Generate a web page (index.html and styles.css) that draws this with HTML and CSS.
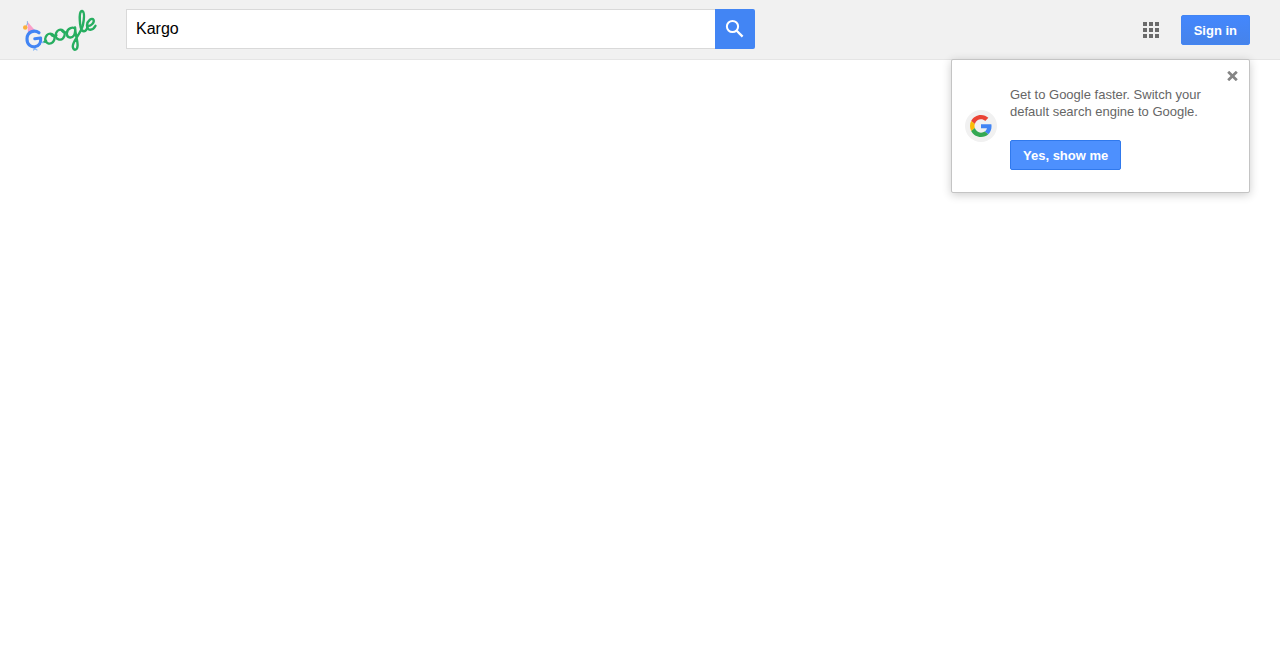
FILE: index.html
```html
<!DOCTYPE html>
<html lang="en">
<head>
<meta charset="utf-8">
<title>Kargo - Google Search</title>
<link rel="stylesheet" href="styles.css">
</head>
<body>
<header class="topbar">
  <a class="logo" href="#" aria-label="Google">
    <svg width="80" height="46" viewBox="20 7 80 46" fill="none" stroke-linecap="round" stroke-linejoin="round">
      <path d="M28 33 L27.3 21.5 L35.2 30.5 Z" fill="#f99fc9"/>
      <path d="M27.4 24 V21.5 M26.5 25.5 L27.5 23.5" stroke="#8fb4e8" stroke-width="1"/>
      <circle cx="25.2" cy="27.5" r="2.2" fill="#fbb03b"/>
      <path d="M34.5 47 L35 49.5 M33.5 50 L35 48.5 L37 50" stroke="#8ebcf7" stroke-width="1.2"/>
      <path d="M40.5 42 Q43.5 43 46.5 41.5" stroke="#8ebcf7" stroke-width="1.8"/>
      <path d="M39 32.8 C34.5 29.2 27.2 31.6 27 38.7 C26.8 44.5 31 47.3 34.8 46.8 C39 46.2 41.2 42.5 40.6 38 L34.8 38.8" stroke="#4285f4" stroke-width="3.1"/>
      <g stroke="#27ae60" stroke-width="2.4">
        <path d="M44.5 41.6 Q45.5 41.5 46 40.8"/>
        <ellipse cx="49.9" cy="38.7" rx="4.5" ry="5" transform="rotate(25 49.9 38.7)"/>
        <path d="M51 34.4 Q53 37.2 56.4 35.2"/>
        <ellipse cx="60.2" cy="34.7" rx="4.4" ry="5" transform="rotate(20 60.2 34.7)"/>
        <path d="M61.5 30.2 Q63.5 33.4 67 32"/>
        <path d="M75.3 29.2 C73.5 26.2 67.2 27.8 66.8 33.2 C66.6 37.8 71.5 39 74 35.4 C75.2 33.5 75.4 31 75.1 27.5 C75.2 34 77.8 41 77.6 45.5 C77.3 50.7 73.5 51 72.8 46.8 C72 41.5 80.5 34.5 82.8 25.5 C83.8 20.5 84.8 12 82.3 11 C79.7 10.7 79.6 16 79.8 20 C80 25 80.8 31.6 84 31.3 C86 31 87.2 28.4 87.6 26.3"/>
        <path d="M87.6 26 C91 26.5 94.7 22.4 93.5 19.7 C92.2 17.3 87.3 20.5 87 25.4 C87 31.8 93 30.5 95.5 25.7"/>
      </g>
    </svg>
  </a>
  <form class="search" role="search">
    <input class="search-input" type="text" value="Kargo" aria-label="Search">
    <button class="search-button" type="button" aria-label="Google Search">
      <svg width="20" height="20" viewBox="0 0 20 20" fill="none" stroke="#fff">
        <circle cx="7.5" cy="7.5" r="5.6" stroke-width="2"/>
        <path d="M11.7 11.7 L17.6 17.6" stroke-width="2.3"/>
      </svg>
    </button>
  </form>
  <nav class="account">
    <button class="apps" type="button" aria-label="Google apps">
      <svg width="16" height="16" viewBox="0 0 16 16" fill="#6b6b6b">
        <path d="M0 0h4v4H0zM6 0h4v4H6zM12 0h4v4h-4zM0 6h4v4H0zM6 6h4v4H6zM12 6h4v4h-4zM0 12h4v4H0zM6 12h4v4H6zM12 12h4v4h-4z"/>
      </svg>
    </button>
    <a class="sign-in" href="#">Sign in</a>
    <aside class="promo">
      <span class="promo-logo">
        <svg width="22" height="22" viewBox="0 0 48 48">
          <path fill="#EA4335" d="M24 9.5c3.54 0 6.71 1.22 9.21 3.6l6.85-6.85C35.9 2.38 30.47 0 24 0 14.62 0 6.51 5.38 2.56 13.22l7.98 6.19C12.43 13.72 17.74 9.5 24 9.5z"/>
          <path fill="#4285F4" d="M46.98 24.55c0-1.57-.15-3.09-.38-4.55H24v9.02h12.94c-.58 2.96-2.26 5.48-4.78 7.18l7.73 6c4.51-4.18 7.09-10.36 7.09-17.65z"/>
          <path fill="#FBBC05" d="M10.53 28.59c-.48-1.45-.76-2.99-.76-4.59s.27-3.14.76-4.59l-7.98-6.19C.92 16.46 0 20.12 0 24c0 3.88.92 7.54 2.56 10.78l7.97-6.19z"/>
          <path fill="#34A853" d="M24 48c6.48 0 11.93-2.13 15.89-5.81l-7.73-6c-2.15 1.45-4.92 2.3-8.16 2.3-6.26 0-11.57-4.22-13.47-9.91l-7.98 6.19C6.51 42.62 14.62 48 24 48z"/>
        </svg>
      </span>
      <div class="promo-body">
        <p class="promo-text">Get to Google faster. Switch your default search engine to Google.</p>
        <button class="promo-button" type="button">Yes, show me</button>
      </div>
      <button class="promo-close" type="button" aria-label="Close">
        <svg width="11" height="10" viewBox="0 0 11 10" fill="none" stroke="#858585" stroke-width="2.8">
          <path d="M1.2 0.8 L9.8 9.2 M9.8 0.8 L1.2 9.2"/>
        </svg>
      </button>
    </aside>
  </nav>
</header>
</body>
</html>
```
FILE: styles.css
```css
* {
  box-sizing: border-box;
}

body {
  min-height: 100vh;
  margin: 0;
  background: #fff;
  font-family: "Liberation Sans", Arial, sans-serif;
  font-size: 13px;
}

button {
  margin: 0;
  padding: 0;
  border: 0;
  background: none;
  font: inherit;
  cursor: pointer;
}

svg {
  display: block;
}

.topbar {
  display: flex;
  align-items: center;
  height: 60px;
  padding: 0 30px 0 20px;
  background: #f1f1f1;
  border-bottom: 1px solid #e5e5e5;
}

.logo {
  flex: none;
  margin-right: 26px;
}

.search {
  display: flex;
  flex: 0 1 629px;
  height: 40px;
  margin-bottom: 1px;
}

.search-input {
  flex: 1;
  min-width: 0;
  padding: 0 9px;
  border: 1px solid #d9d9d9;
  border-right: 0;
  border-radius: 0;
  background: #fff;
  color: #000;
  font: 16px "Liberation Sans", Arial, sans-serif;
  outline: 0;
}

.search-button {
  display: flex;
  flex: none;
  align-items: center;
  justify-content: center;
  width: 40px;
  border-radius: 0 2px 2px 0;
  background: #4285f4;
}

.account {
  position: relative;
  display: flex;
  align-items: center;
  gap: 22px;
  height: 60px;
  margin-left: auto;
}

.sign-in {
  padding: 1px 12px 0;
  border: 1px solid #4285f4;
  border-radius: 2px;
  background: linear-gradient(#4387fd, #4683ea);
  color: #fff;
  font-weight: bold;
  line-height: 27px;
  text-decoration: none;
  white-space: nowrap;
}

.promo {
  position: absolute;
  top: 59px;
  right: 0;
  z-index: 1;
  display: flex;
  align-items: center;
  gap: 13px;
  width: 299px;
  padding: 22px 40px 22px 13px;
  border: 1px solid #c4c4c4;
  border-radius: 2px;
  background: #fff;
  box-shadow: 0 2px 10px rgba(0, 0, 0, 0.2);
}

.promo-logo {
  display: flex;
  flex: none;
  align-items: center;
  justify-content: center;
  width: 32px;
  height: 32px;
  border-radius: 50%;
  background: #f1f1f1;
}

.promo-body {
  padding-top: 4px;
}

.promo-text {
  margin: 0 0 20px;
  color: #666;
  line-height: 17px;
}

.promo-button {
  display: block;
  padding: 1px 12px 0;
  border: 1px solid #3079ed;
  border-radius: 2px;
  background: #4d90fe;
  color: #fff;
  font-weight: bold;
  line-height: 27px;
}

.promo-close {
  position: absolute;
  top: 11px;
  right: 11px;
}
```
